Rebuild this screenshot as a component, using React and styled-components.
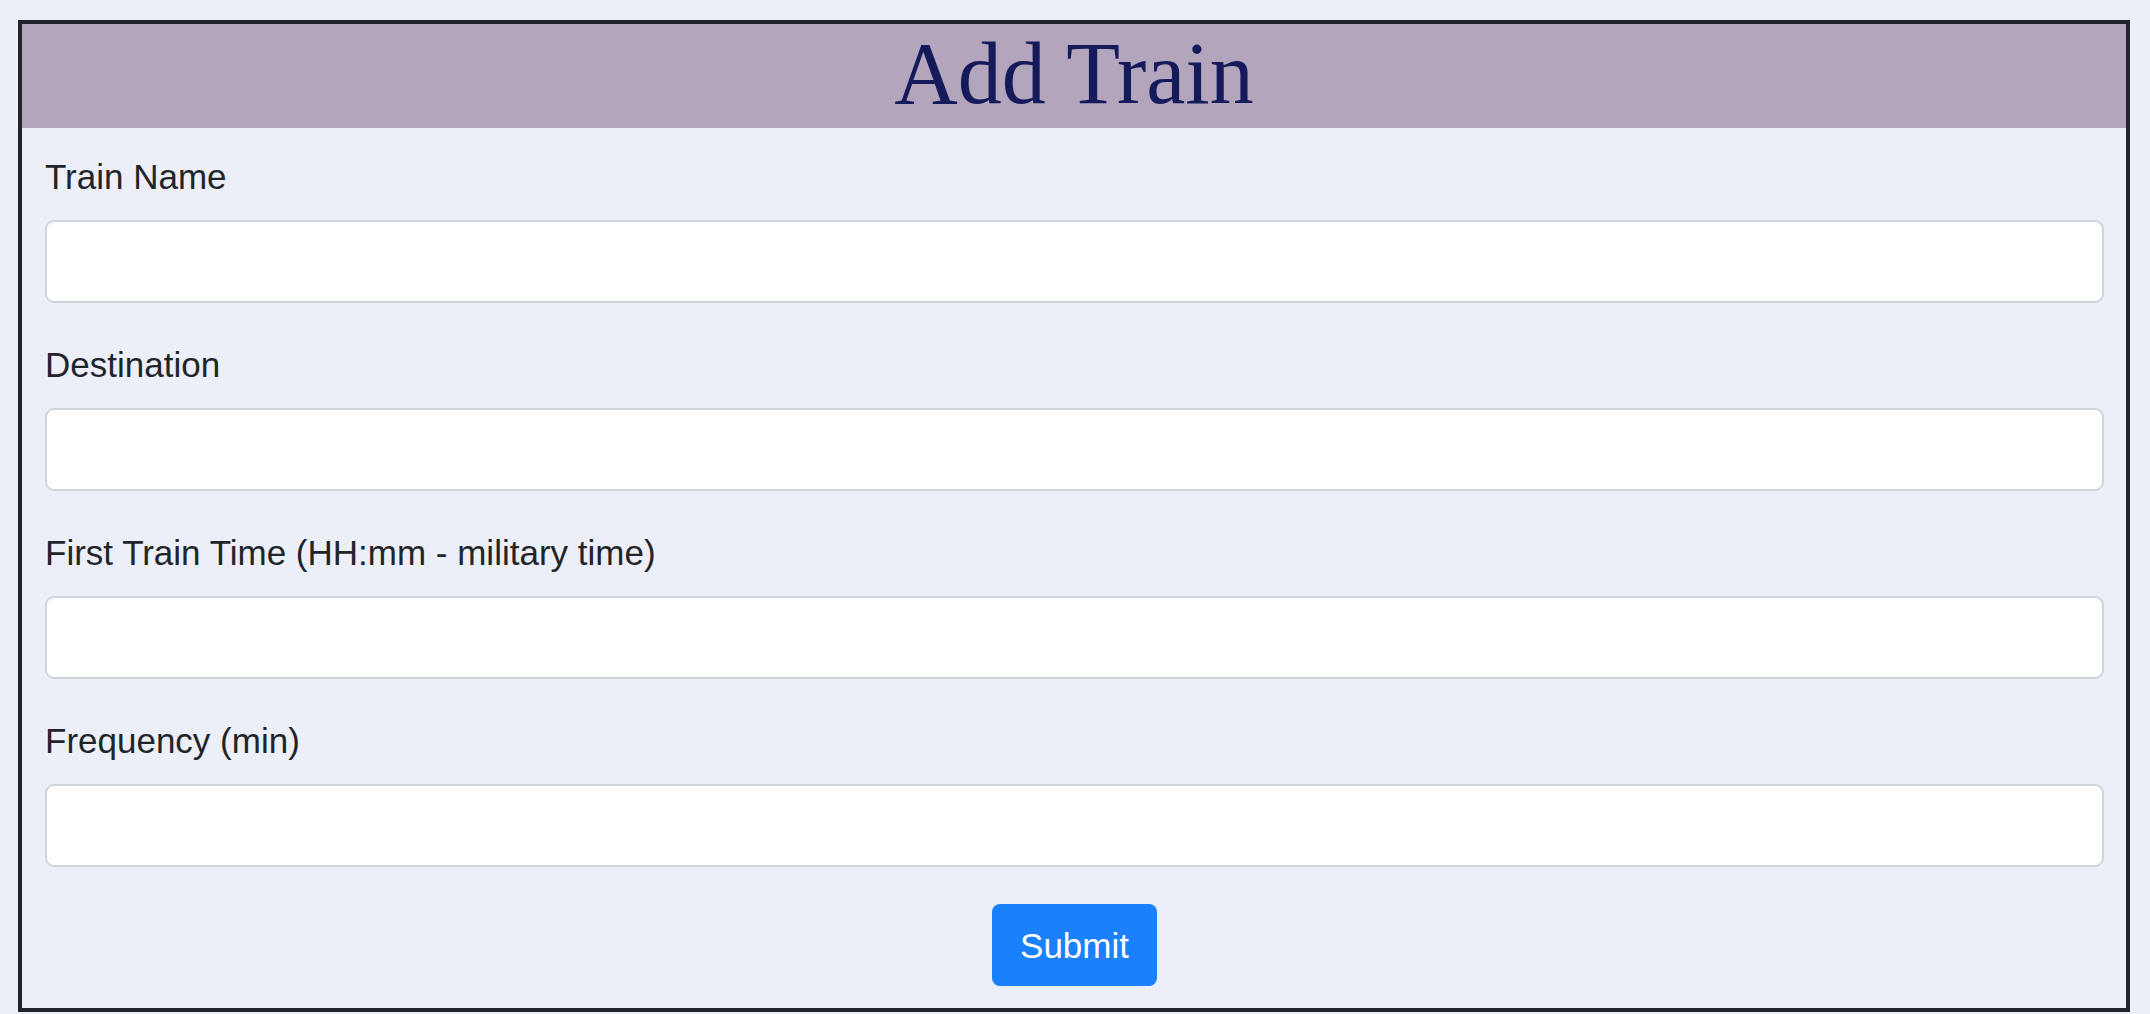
import React from "react";
import styled, { createGlobalStyle } from "styled-components";

const GlobalStyle = createGlobalStyle`
  html, body {
    margin: 0;
    padding: 0;
    background: #eceff7;
  }
  * { box-sizing: border-box; }
`;

const Page = styled.div`
  padding: 20px 20px 0 18px;
  font-family: "Liberation Sans", Arial, sans-serif;
  color: #212529;
`;

const Card = styled.section`
  border: 4px solid #212529;
  background: #eceff7;
`;

const Header = styled.header`
  background: #b3a5bc;
  height: 104px;
  display: flex;
  align-items: flex-start;
  justify-content: center;
`;

const Title = styled.h1`
  margin: 0;
  font-family: "Liberation Serif", "Times New Roman", serif;
  font-weight: 400;
  font-size: 88px;
  line-height: 100px;
  color: #151a5b;
`;

const Form = styled.form`
  padding: 22px 22px 22px 23px;
  display: flex;
  flex-direction: column;
`;

const Group = styled.div`
  display: flex;
  flex-direction: column;
  margin-bottom: 35px;
`;

const Label = styled.label`
  font-size: 35px;
  line-height: 53px;
  margin-bottom: 17px;
  color: #212529;
`;

const Input = styled.input`
  height: 83px;
  width: 100%;
  border: 2px solid #d0d4db;
  border-radius: 9px;
  background: #ffffff;
  font-size: 35px;
  font-family: inherit;
  padding: 0 26px;
  outline: none;
`;

const Actions = styled.div`
  display: flex;
  justify-content: center;
  padding-top: 2px;
`;

const Button = styled.button`
  height: 82px;
  padding: 0 28px;
  border: none;
  border-radius: 8px;
  background: #1a80fc;
  color: #ffffff;
  font-family: "Liberation Sans", Arial, sans-serif;
  font-size: 35px;
  line-height: 1;
  cursor: pointer;
`;

const fields = [
  { id: "train-name", label: "Train Name" },
  { id: "destination", label: "Destination" },
  { id: "first-train", label: "First Train Time (HH:mm - military time)" },
  { id: "frequency", label: "Frequency (min)" },
];

export default function App() {
  return (
    <>
      <GlobalStyle />
      <Page>
        <Card>
          <Header>
            <Title>Add Train</Title>
          </Header>
          <Form onSubmit={(e) => e.preventDefault()}>
            {fields.map((f) => (
              <Group key={f.id}>
                <Label htmlFor={f.id}>{f.label}</Label>
                <Input id={f.id} type="text" />
              </Group>
            ))}
            <Actions>
              <Button type="submit">Submit</Button>
            </Actions>
          </Form>
        </Card>
      </Page>
    </>
  );
}
